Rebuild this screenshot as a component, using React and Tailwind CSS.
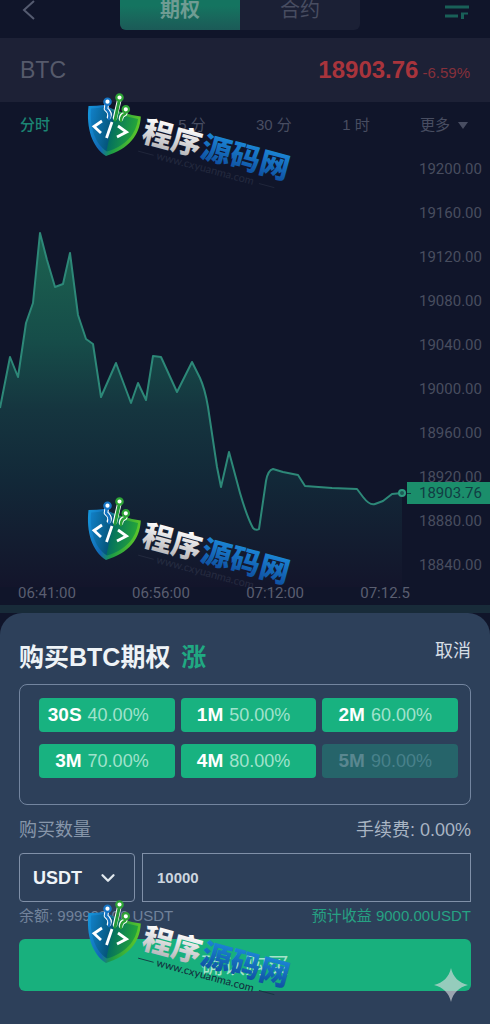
import React, { useState } from "react";
import { ChevronDown } from "lucide-react";

const periods = ["分时", "1 分", "5 分", "30 分", "1 时"];

const prices = [
  "19200.00",
  "19160.00",
  "19120.00",
  "19080.00",
  "19040.00",
  "19000.00",
  "18960.00",
  "18920.00",
  "18880.00",
  "18840.00",
];

const times = ["06:41:00", "06:56:00", "07:12:00", "07:12.5"];

const options = [
  { time: "30S", rate: "40.00%" },
  { time: "1M", rate: "50.00%" },
  { time: "2M", rate: "60.00%" },
  { time: "3M", rate: "70.00%" },
  { time: "4M", rate: "80.00%" },
  { time: "5M", rate: "90.00%", disabled: true },
];

const line =
  "M0 261 L10 210 L18 230 L26 176 L33 156 L40 86 L47 113 L55 140 L63 137 L70 106 L78 168 L86 192 L93 197 L101 250 L116 216 L131 256 L138 236 L146 253 L153 209 L161 210 L177 245 L192 215 L200 231 Q205 242 208 260 L217 320 L221 340 L229 305 L240 346 Q247 370 253 381 Q256 384 259 382 L266 334 Q268 323 273 322 L283 325 L298 328 L305 339 L332 341 L357 342 L363 350 Q370 359 375 357 L383 354 L392 347 L402 346";

const Watermark = ({ id, className, showUrl }) => (
  <svg
    viewBox="80 90 220 110"
    className={`absolute left-20 w-[220px] h-[110px] pointer-events-none ${className}`}
    aria-hidden="true"
  >
    <defs>
      <linearGradient id={`${id}-edge`} x1="0" y1="0" x2="1" y2="0.2">
        <stop offset="0" stopColor="#1597dc" />
        <stop offset="0.4" stopColor="#1267b2" />
        <stop offset="0.6" stopColor="#1c9b45" />
        <stop offset="1" stopColor="#5bc52b" />
      </linearGradient>
      <linearGradient id={`${id}-core`} x1="0" y1="0" x2="1" y2="0.2">
        <stop offset="0" stopColor="#1180c8" />
        <stop offset="0.5" stopColor="#05567c" />
        <stop offset="0.52" stopColor="#04705f" />
        <stop offset="1" stopColor="#23a33b" />
      </linearGradient>
      <linearGradient id={`${id}-white`} x1="0" y1="0" x2="0" y2="1">
        <stop offset="0.2" stopColor="#ffffff" />
        <stop offset="1" stopColor="#a9a9ad" />
      </linearGradient>
      <linearGradient id={`${id}-blue`} x1="0" y1="0" x2="0" y2="1">
        <stop offset="0.1" stopColor="#1e8fdf" />
        <stop offset="1" stopColor="#0c4696" />
      </linearGradient>
    </defs>

    {/* Shield */}
    <path
      d="M88.5 106 Q97 106 104 105 Q122 114 140.800 116.500 C140 135 129 149 106 156 C92 147 86 128 88.500 106Z"
      fill={`url(#${id}-edge)`}
    />
    <path
      d="M91 108.500 Q98 108 104 107 Q121 116 138 119 C136 134 126 146 107 151.500 C95 144 89.500 127 91 108.500Z"
      fill={`url(#${id}-core)`}
    />
    <g fill="none" strokeLinecap="round" strokeLinejoin="round">
      <g stroke="#fff" strokeWidth="4.600">
        <path d="M107 103 L106 109 Q111 113 109 117" />
        <path d="M119.500 99 L115 118" />
        <path d="M126 110 L125 114 Q121 115 121 119" />
      </g>
      <path d="M107 103 L106 109 Q111 113 109 119" stroke="#1473c0" strokeWidth="2.600" />
      <path d="M119.500 99 L115 120" stroke="#239838" strokeWidth="3" />
      <path d="M126 110 L125 114 Q121 115 121 121" stroke="#2ba136" strokeWidth="2.600" />
      <g stroke="#fff" strokeWidth="2.800" strokeLinecap="butt" strokeLinejoin="miter">
        <path d="M102 121 L94 126.500 L101 133" />
        <path d="M112 122 L106.500 138" />
        <path d="M118 126 L126.500 132 L117 137" />
      </g>
    </g>
    <g fill="#fff" strokeWidth="2.200">
      <circle cx="107.500" cy="101.700" r="3.200" stroke="#1675c5" />
      <circle cx="119.500" cy="97.500" r="3.200" stroke="#2ea436" />
      <circle cx="125.800" cy="109.300" r="3.200" stroke="#2ea436" />
    </g>

    {/* Site name */}
    <g
      transform="translate(158 133) rotate(15)"
      fontFamily="'Noto Sans CJK SC', sans-serif"
      fontSize="30"
      fontWeight="900"
    >
      <text x="-15" y="12" fill={`url(#${id}-white)`}>
        程序
      </text>
      <text x="46" y="12" fill={`url(#${id}-blue)`}>
        源码网
      </text>
    </g>
    <g transform="translate(156 158) rotate(15)" opacity={showUrl ? 1 : 0.15}>
      <text
        x="0"
        y="1"
        fontFamily="Lato, sans-serif"
        fontSize="11"
        fontWeight="500"
        fill={showUrl ? "#12333f" : "#8791a5"}
      >
        www.cxyuanma.com
      </text>
      <path
        d="M-19 -2 H-3 M106 -2 H122"
        stroke={showUrl ? "#12333f" : "#8791a5"}
        strokeWidth="0.800"
      />
    </g>
  </svg>
);

const App = () => {
  const [cantidad, setCantidad] = useState("10000");
  const [moneda, setMoneda] = useState("USDT");

  return (
    <div className="relative min-h-screen flex flex-col overflow-hidden bg-[#10152a] font-['Liberation_Sans','Noto_Sans_CJK_SC',sans-serif]">
      {/* Header */}
      <header className="h-[38px] pl-[22px] pr-5 flex items-start justify-between">
        <button aria-label="返回">
          <svg width="14" height="20" viewBox="0 0 14 20" fill="none" stroke="#555b70" strokeWidth="2">
            <path d="M12 1 L2 10 L12 19" />
          </svg>
        </button>
        <div className="-mt-2.5 flex w-60 h-10 rounded-md overflow-hidden bg-[#1b2035] text-xl">
          <button className="flex-1 font-bold bg-gradient-to-b from-[#147460] from-40% to-[#1b5a57] text-[#6f9c93]">
            期权
          </button>
          <button className="flex-1 text-[#484d61]">合约</button>
        </div>
        <button className="mt-1" aria-label="订单">
          <svg width="26" height="17" viewBox="0 0 26 17" fill="none" stroke="#196058" strokeWidth="3">
            <path d="M1 3 H25" />
            <path d="M1 12 H14" />
            <path d="M17 9.500 H24" strokeWidth="2" />
            <path d="M18.500 9 V15" strokeWidth="3" />
          </svg>
        </button>
      </header>

      {/* Price */}
      <div className="h-16 px-5 flex items-center justify-between bg-[#1d2136]">
        <h1 className="text-[23px] text-[#565a6b] font-medium">BTC</h1>
        <div className="flex items-baseline gap-1 text-[#a8343c]">
          <span className="text-2xl font-bold">18903.76</span>
          <span className="text-[15px] text-[#86303b]">-6.59%</span>
        </div>
      </div>

      {/* Periods */}
      <nav className="h-[45px] pt-0.5 pl-5 pr-[22px] flex items-center justify-between text-[15px] text-[#484d61]">
        {periods.map((p, i) => (
          <button key={p} className={i === 0 ? "text-[#1b8573] font-medium" : ""}>
            {p}
          </button>
        ))}
        <button className="flex items-center gap-2">
          更多
          <svg width="10" height="7" viewBox="0 0 10 7" fill="#484d61">
            <path d="M0 0 H10 L5 7Z" />
          </svg>
        </button>
      </nav>

      {/* Chart */}
      <section className="relative flex font-['Roboto',sans-serif]">
        <svg viewBox="0 0 407 440" preserveAspectRatio="none" className="flex-1 min-w-0 h-[440px]">
          <defs>
            <linearGradient id="area" gradientUnits="userSpaceOnUse" x1="0" y1="86" x2="0" y2="440">
              <stop offset="0" stopColor="#1c6350" />
              <stop offset="0.3" stopColor="#164d49" />
              <stop offset="0.5" stopColor="#15353f" />
              <stop offset="0.7" stopColor="#122838" />
              <stop offset="0.85" stopColor="#131e31" />
              <stop offset="1" stopColor="#13152b" />
            </linearGradient>
          </defs>
          <path d={`${line} V440 H0Z`} fill="url(#area)" />
          <path d={line} fill="none" stroke="#2d8878" strokeWidth="2" strokeLinejoin="round" />
          <circle cx="402" cy="346" r="3" fill="#1c5a55" stroke="#2d9a80" strokeWidth="2" />
        </svg>
        <ul className="w-[83px] pl-3 text-[15px] text-[#484d5f]">
          {prices.map((p) => (
            <li key={p} className="h-11 flex items-center">
              {p}
            </li>
          ))}
        </ul>
        <div className="absolute right-0 top-[335px] w-[83px] h-[22px] pl-3 flex items-center bg-[#1b8e6b] text-[15px] text-[#113d43]">
          18903.76
          <span className="absolute left-0 w-1 h-px bg-[#113d43]" />
        </div>
      </section>
      <div className="h-[18px] pl-[18px] pr-20 flex justify-between text-[15px] leading-3 text-[#5a5e70] font-['Roboto',sans-serif]">
        {times.map((t) => (
          <span key={t}>{t}</span>
        ))}
      </div>
      <div className="h-2 bg-[#182b39]" />

      {/* Order panel */}
      <main className="flex-1 px-[19px] pb-[33px] rounded-t-[22px] bg-[#2d405a]">
        <div className="pt-[26px] flex items-start justify-between">
          <h2 className="text-[25px] leading-9 font-bold text-[#eef3f7]">
            购买BTC期权 <span className="ml-1 text-[#20a982]">涨</span>
          </h2>
          <button className="text-lg leading-6 text-[#d5dde5]">取消</button>
        </div>

        <div className="mt-[9px] pt-[13px] pb-[26px] pl-[19px] pr-3 grid grid-cols-3 gap-x-1.5 gap-y-3 border border-[#73859f] rounded-lg">
          {options.map((o) => (
            <button
              key={o.time}
              disabled={o.disabled}
              className={`h-[34px] pr-[26px] flex items-center justify-end gap-1.5 rounded text-lg ${
                o.disabled ? "bg-[#26646a] text-[#48818a]" : "bg-[#18b280] text-[#a0e2cc]"
              }`}
            >
              <b className={`text-[19px] ${o.disabled ? "text-[#5a8790]" : "text-white"}`}>
                {o.time}
              </b>
              {o.rate}
            </button>
          ))}
        </div>

        <div className="mt-3 flex justify-between text-lg leading-[26px] text-[#8796aa]">
          <label htmlFor="cantidad">购买数量</label>
          <span className="text-[#a9b5c4]">手续费: 0.00%</span>
        </div>

        <div className="mt-2.5 flex gap-[7px]">
          <div className="relative w-[116px]">
            <select
              value={moneda}
              onChange={(e) => setMoneda(e.target.value)}
              aria-label="币种"
              className="appearance-none w-full h-[49px] pl-[13px] border border-[#8090a8] rounded bg-transparent text-lg font-bold text-[#eef3f7] outline-none"
            >
              <option value="USDT">USDT</option>
            </select>
            <ChevronDown
              className="absolute right-4 top-3.5 text-[#e2e9ef] pointer-events-none"
              size={22}
              strokeWidth={2.5}
            />
          </div>
          <input
            id="cantidad"
            type="text"
            value={cantidad}
            onChange={(e) => setCantidad(e.target.value)}
            className="flex-1 min-w-0 h-[49px] px-3.5 border border-[#8090a8] bg-transparent text-[15px] font-bold text-[#ccd5df] outline-none"
          />
        </div>

        <div className="mt-0.5 flex justify-between text-[15px] leading-6 text-[#71829a]">
          <span>余额: 999999.00 USDT</span>
          <span className="text-[#26a283]">预计收益 9000.00USDT</span>
        </div>

        <button className="mt-[11px] w-full h-[52px] rounded-md bg-[#18b07d] text-[22px] text-[#a3e3cb]">
          确认购买
        </button>
      </main>

      <Watermark id="wm1" className="top-[90px]" />
      <Watermark id="wm2" className="top-[494px]" />
      <Watermark id="wm3" className="top-[897px]" showUrl />

      <svg
        viewBox="0 0 34 34"
        className="absolute right-[22px] bottom-[22px] w-[34px] h-[34px] pointer-events-none"
        aria-hidden="true"
      >
        <path
          d="M17 0 C19 9 25 15 34 17 C25 19 19 25 17 34 C15 25 9 19 0 17 C9 15 15 9 17 0Z"
          fill="#d9dcdf"
          fillOpacity="0.650"
        />
      </svg>
    </div>
  );
};

export default App;
